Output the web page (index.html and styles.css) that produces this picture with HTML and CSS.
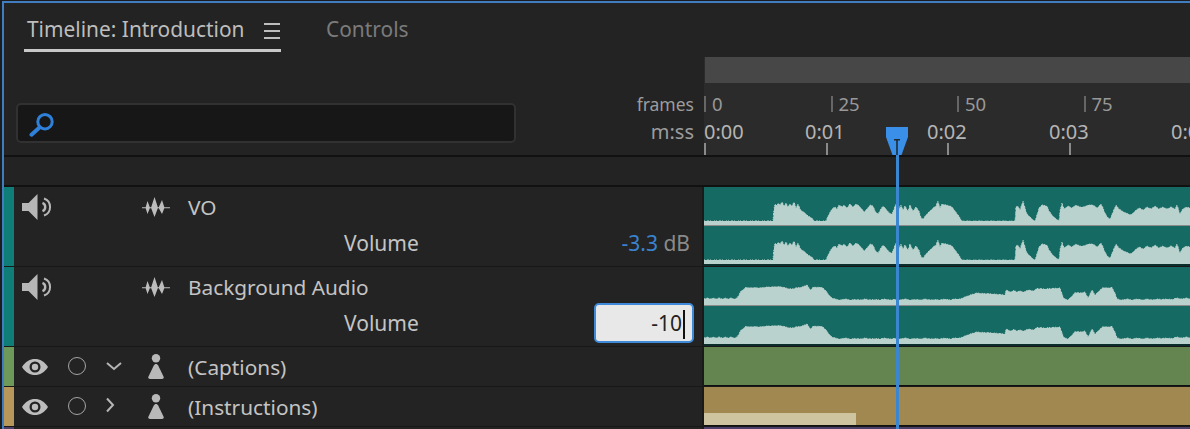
FILE: index.html
```html
<!DOCTYPE html>
<html lang="en">
<head>
<meta charset="utf-8">
<title>Timeline: Introduction</title>
<link rel="stylesheet" href="styles.css">
</head>
<body>
<svg class="defs" width="0" height="0" aria-hidden="true">
  <defs>
    <symbol id="speaker" viewBox="0 0 30 26">
      <path d="M0 9H6.500L15.500 0V26L6.500 17H0Z" fill="#b7b7b7"/>
      <path d="M22 4.500A9 9 0 0 1 22 21.500" fill="none" stroke="#b7b7b7" stroke-width="2"/>
      <path d="M20.500 8.800A4.600 4.600 0 0 1 20.500 17.200" fill="none" stroke="#b7b7b7" stroke-width="2.400"/>
    </symbol>
    <symbol id="wave" viewBox="0 0 28 20">
      <path d="M0 10.200H28V11.200H0Z M3.500 10.700L5.500 4L8 10.700L5.500 17Z M9 10.700L12.500 0L16 10.700L12.500 20Z M16.500 10.700L20 3L22.500 10.700L20 17Z" fill="#bdbdbd"/>
    </symbol>
    <symbol id="eye" viewBox="0 0 26 16">
      <path fill-rule="evenodd" d="M0 8C3.500 2.500 8 0 13 0S22.500 2.500 26 8C22.500 13.500 18 16 13 16S3.500 13.500 0 8ZM13 2.500A5.500 5.500 0 1 0 13 13.500A5.500 5.500 0 1 0 13 2.500Z" fill="#bdbdbd"/>
      <circle cx="13" cy="8" r="3.200" fill="#bdbdbd"/>
    </symbol>
    <symbol id="person" viewBox="0 0 16 25">
      <circle cx="8" cy="4.200" r="4.200" fill="#b9b9b9"/>
      <path d="M8 10C9 10 9.700 10.600 10.200 11.600L15.500 22.500C16.200 24 15.500 25 14 25H2C.5 25-.2 24 .5 22.500L5.800 11.600C6.300 10.600 7 10 8 10Z" fill="#b9b9b9"/>
    </symbol>
    <symbol id="open" viewBox="0 0 18 12">
      <path d="M2 3L9 9L16 3" fill="none" stroke="#b5b5b5" stroke-width="2"/>
    </symbol>
    <symbol id="closed" viewBox="0 0 10 16">
      <path d="M2 1.500L8 8L2 14.500" fill="none" stroke="#b5b5b5" stroke-width="2"/>
    </symbol>
    <path id="vo-shape" d="M0 34L69 34 70 22 71 17 73 19 74 16 76 18 78 15 80 19 82 16 84 20 86 17 88 19 90 15 92 21 94 17 96 22 98 24 101 26 104 29 108 31 110 34 122 34 125 27 128 22 131 20 133 22 135 18 138 20 140 18 143 21 146 17 149 20 152 17 155 19 158 22 160 25 163 22 166 18 169 19 171 24 174 27 177 22 179 19 182 22 185 26 188 27 190 22 192 17 194 17 196 22 197 18 199 23 201 19 204 24 206 18 209 24 212 20 215 24 217 31 219 32 222 28 226 24 229 21 232 19 234 14 236 21 238 17 242 18 246 19 249 21 251 24 254 28 258 34 311 34 312 20 314 19 316 23 319 14 321 21 323 27 325 29 328 32 331 34 333 28 335 21 338 18 343 19 345 24 348 28 351 31 355 34 356 24 358 16 360 22 364 19 368 21 372 18 376 20 380 20 384 18 389 18 393 21 397 17 399 21 401 26 404 31 406 32 409 25 412 18 415 22 418 24 422 26 427 28 431 24 435 21 439 23 443 20 447 22 451 19 455 22 459 20 463 22 467 20 471 22 473 18 476 27 478 23 482 20 486 21V38H0Z"/>
    <path id="bg-shape" d="M0 32L3 31 6 32 9 31 12 32 15 31 18 32 21 31 24 32 27 31 30 32 33 31 35 28 37 24 40 22 42 20 44 21 50 20.500 56 21 62 20 68 20 74 19.500 78 20 84 21.500 88 22 92 21 98 20 103 18 105 21 107 23 109 20 112 20.500 116 20 119 21 122 24 125 28 128 31 131 32 136 33 141 32 146 33 151 32.500 156 33 161 32 166 33 171 32.500 176 33 181 32 186 33 191 32.500 196 33 201 32 206 33 211 32.500 216 33 221 32 226 33 231 32.500 236 33 241 32 246 33 251 32 256 32 261 30 266 28 273 26 280 26.500 290 27 301 28 302 23 306 25 310 23.500 313 25 316 24 320 25 324 23 329 24 333 21.500 340 22 348 21.500 356 21 358 27 360 31.500 364 33 368 29 371 25.500 376 26 381 25 384 31 386 27 388 23 391 28 394 25 399 20.500 404 21 408 20.500 411 26 413 32 418 33 423 32 428 33 433 32 438 33 443 32 448 33 453 32 458 32.500 463 32 468 32.500 473 31 478 32 482 31 486 32V38H0Z"/>
  </defs>
</svg>
<div class="panel">
  <header class="tabs">
    <div class="tab active">
      <span class="tab-label">Timeline: Introduction</span>
      <span class="menu"><i></i><i></i><i></i></span>
    </div>
    <div class="tab inactive">Controls</div>
  </header>

  <section class="ruler-row">
    <div class="ruler-left">
      <div class="search">
        <svg class="search-icon" viewBox="0 0 26 24"><circle cx="16" cy="8.700" r="7.200" fill="none" stroke="#2f80d8" stroke-width="3"/><path d="M10.500 14.500L2.500 21.700" stroke="#2f80d8" stroke-width="4" stroke-linecap="round"/></svg>
      </div>
      <div class="units">
        <div class="unit-frames">frames</div>
        <div class="unit-time">m:ss</div>
      </div>
    </div>
    <div class="ruler">
      <div class="work-bar"></div>
      <div class="frames">
        <div class="frame-cell">0</div>
        <div class="frame-cell">25</div>
        <div class="frame-cell">50</div>
        <div class="frame-cell">75</div>
      </div>
      <div class="times">
        <div class="time">0:00</div>
        <div class="time">0:01</div>
        <div class="time">0:02</div>
        <div class="time">0:03</div>
        <div class="time">0:04</div>
      </div>
      <div class="ticks">
        <i></i><i></i><i></i><i></i><i></i>
      </div>
    </div>
  </section>

  <div class="spacer"></div>

  <section class="tracks">
    <div class="track audio">
      <div class="stripe teal"></div>
      <div class="head">
        <div class="line">
          <svg class="ico-speaker"><use href="#speaker"/></svg>
          <svg class="ico-wave"><use href="#wave"/></svg>
          <span class="name">VO</span>
        </div>
        <div class="line volume">
          <span class="vol-label">Volume</span>
          <span class="vol-value"><b>-3.3</b> dB</span>
        </div>
      </div>
      <div class="clip teal-clip">
        <svg class="channel"><use href="#vo-shape"/></svg>
        <svg class="channel second"><use href="#vo-shape"/></svg>
      </div>
    </div>

    <div class="track audio">
      <div class="stripe teal"></div>
      <div class="head">
        <div class="line">
          <svg class="ico-speaker"><use href="#speaker"/></svg>
          <svg class="ico-wave"><use href="#wave"/></svg>
          <span class="name">Background Audio</span>
        </div>
        <div class="line volume">
          <span class="vol-label">Volume</span>
          <span class="vol-input">-10<i class="caret"></i></span>
        </div>
      </div>
      <div class="clip teal-clip">
        <svg class="channel"><use href="#bg-shape"/></svg>
        <svg class="channel second"><use href="#bg-shape"/></svg>
      </div>
    </div>

    <div class="track caption">
      <div class="stripe green"></div>
      <div class="head">
        <div class="line">
          <svg class="ico-eye"><use href="#eye"/></svg>
          <span class="ring"></span>
          <svg class="ico-open"><use href="#open"/></svg>
          <svg class="ico-person"><use href="#person"/></svg>
          <span class="name">(Captions)</span>
        </div>
      </div>
      <div class="clip green-clip"></div>
    </div>

    <div class="track caption">
      <div class="stripe tan"></div>
      <div class="head">
        <div class="line">
          <svg class="ico-eye"><use href="#eye"/></svg>
          <span class="ring"></span>
          <svg class="ico-closed"><use href="#closed"/></svg>
          <svg class="ico-person"><use href="#person"/></svg>
          <span class="name">(Instructions)</span>
        </div>
      </div>
      <div class="clip tan-clip"><div class="caption-item"></div></div>
    </div>

    <div class="track last">
      <div class="stripe purple"></div>
      <div class="head"></div>
      <div class="clip purple-clip"></div>
    </div>
  </section>

  <div class="playhead">
    <svg class="playhead-cap" viewBox="0 0 22 28"><path d="M0 0H22V10L15.500 28H6.500L0 10Z" fill="#3a8fe8"/><path d="M8 12H14V13.500H11.800V28H10.200V13.500H8Z" fill="#1f2a35"/></svg>
    <div class="playhead-line"></div>
  </div>
</div>
</body>
</html>
```
FILE: styles.css
```css
* { box-sizing: border-box; }
html, body { margin: 0; height: 429px; overflow: hidden; background: #1c1c1c; }
body { font-family: "Noto Sans", "Open Sans", sans-serif; color: #c4c4c4; }
.defs { position: absolute; }
i { font-style: normal; }

.panel {
  position: relative;
  margin: 1px 0 0 2px;
  height: 428px;
  border-top: 2px solid #3f7cc0;
  border-left: 2px solid #3f7cc0;
  background: #232323;
  overflow: hidden;
}

/* Tabs */
.tabs { display: flex; height: 50px; padding-left: 20px; }
.tab { height: 49px; font-size: 20.900px; line-height: 52px; white-space: nowrap; }
.tab.active {
  display: flex;
  width: 257px;
  padding-left: 3px;
  border-bottom: 3px solid #c8c8c8;
  color: #bdbdbd;
}
.tab-label { width: 237px; }
.tab.inactive { margin-left: 45px; color: #7b7b7b; }
.menu { display: flex; flex-direction: column; gap: 5px; padding-top: 20px; }
.menu i { display: block; width: 16px; height: 2px; background: #bdbdbd; }

/* Ruler */
.ruler-row { display: flex; height: 104px; border-bottom: 2px solid #111; }
.ruler-left { display: flex; width: 700px; flex: none; }
.search {
  width: 500px;
  height: 40px;
  margin: 50px 0 0 12px;
  padding: 8px 0 0 11px;
  border: 2px solid #313131;
  border-radius: 5px;
  background: #171717;
}
.search-icon { display: block; width: 26px; height: 24px; }
.units {
  width: 178px;
  padding-top: 37px;
  line-height: 28px;
  text-align: right;
  color: #9c9c9c;
}
.unit-frames { font-size: 17.500px; }
.unit-time { font-size: 20px; }
.ruler {
  flex: 1;
  min-width: 0;
  margin-top: 4px;
  background: #2b2b2b;
  display: flex;
  flex-direction: column;
}
.work-bar { height: 26px; margin-left: 1px; background: #474747; }
.frames { display: flex; height: 16px; margin-top: 13px; }
.frame-cell {
  flex: none;
  width: 126.500px;
  padding-left: 6px;
  border-left: 2px solid #666;
  font-size: 18.500px;
  line-height: 16px;
  color: #999;
}
.times { display: flex; margin-top: 10px; height: 20px; white-space: nowrap; }
.time { flex: none; width: 122px; font-size: 20px; line-height: 20px; color: #b5b5b5; }
.time:first-child { width: 101px; }
.ticks { display: flex; margin-top: 1px; height: 12px; }
.ticks i { flex: none; width: 121.700px; border-left: 2px solid #8a8a8a; }

.spacer { height: 30px; border-bottom: 2px solid #111; }

/* Tracks */
.track { display: flex; border-bottom: 1px solid #181818; }
.track.audio { height: 80px; }
.track.caption { height: 40px; }
.track.last { height: 10px; border-bottom: 0; }
.stripe { flex: none; width: 10px; }
.stripe.teal { background: #0f7d78; }
.stripe.green { background: #6d9a5a; }
.stripe.tan { background: #b8985a; }
.stripe.purple { background: #4a4068; }
.head { flex: none; width: 690px; }
.line { position: relative; display: flex; align-items: center; height: 40px; padding-left: 8px; }
.line.volume { height: 32px; justify-content: flex-end; padding: 0 10px 0 0; }

.ico-speaker { flex: none; width: 30px; height: 26px; margin-right: 90px; }
.ico-wave { flex: none; width: 28px; height: 20px; margin-right: 18px; }
.ico-eye { flex: none; width: 26px; height: 16px; margin-right: 20px; }
.ring { flex: none; width: 18px; height: 18px; margin-right: 19px; border: 1.500px solid #a5a5a5; border-radius: 50%; position: relative; top: -1px; }
.ico-open { flex: none; width: 18px; height: 12px; margin-right: 25px; position: relative; top: -1px; }
.ico-closed { flex: none; width: 10px; height: 16px; margin-right: 33px; position: relative; top: -2px; }
.ico-person { flex: none; width: 16px; height: 25px; margin-right: 24px; position: relative; top: -1px; }
.name { font-size: 20.800px; white-space: nowrap; color: #c4c4c4; }

.vol-label { position: absolute; left: 330px; font-size: 21px; color: #c4c4c4; }
.vol-value { margin-right: 4px; font-size: 21px; color: #8a8a8a; }
.vol-value b { font-weight: 400; color: #3a82cf; }
.vol-input {
  display: block;
  width: 100px;
  height: 40px;
  padding-right: 7px;
  border: 2px solid #3f8ad8;
  border-radius: 5px;
  background: #e8e8e8;
  color: #222;
  font-size: 21px;
  line-height: 36px;
  text-align: right;
}
.caret { display: inline-block; width: 2px; height: 29px; margin-left: 1px; background: #111; vertical-align: -8px; }

/* Clips */
.clip { flex: 1; min-width: 0; overflow: hidden; box-shadow: -2px 0 0 #1a1a1a; }
.teal-clip { background: #166a64; border-bottom: 2px solid #0b2e2c; }
.channel {
  display: block;
  width: 486px;
  height: 38px;
  fill: #b9d2cd;
  stroke: #b9d2cd;
  stroke-width: 1;
  stroke-dasharray: 1 2 2 1 1 3 1 1;
}
.channel.second { border-top: 1px solid #8a8a8a; height: 39px; }
.green-clip { background: #64854f; border-bottom: 1px solid #111; }
.tan-clip { display: flex; align-items: flex-end; background: #a08850; border-bottom: 1px solid #111; }
.caption-item { width: 152px; height: 12px; background: #cfc4a0; }
.purple-clip { background: #4a4068; }

/* Playhead */
.playhead { position: absolute; left: 882px; top: 124px; width: 22px; bottom: 0; }
.playhead-cap { display: block; width: 22px; height: 28px; }
.playhead-line { position: absolute; left: 10px; top: 28px; bottom: 0; width: 3px; background: #3a86d0; }
```
